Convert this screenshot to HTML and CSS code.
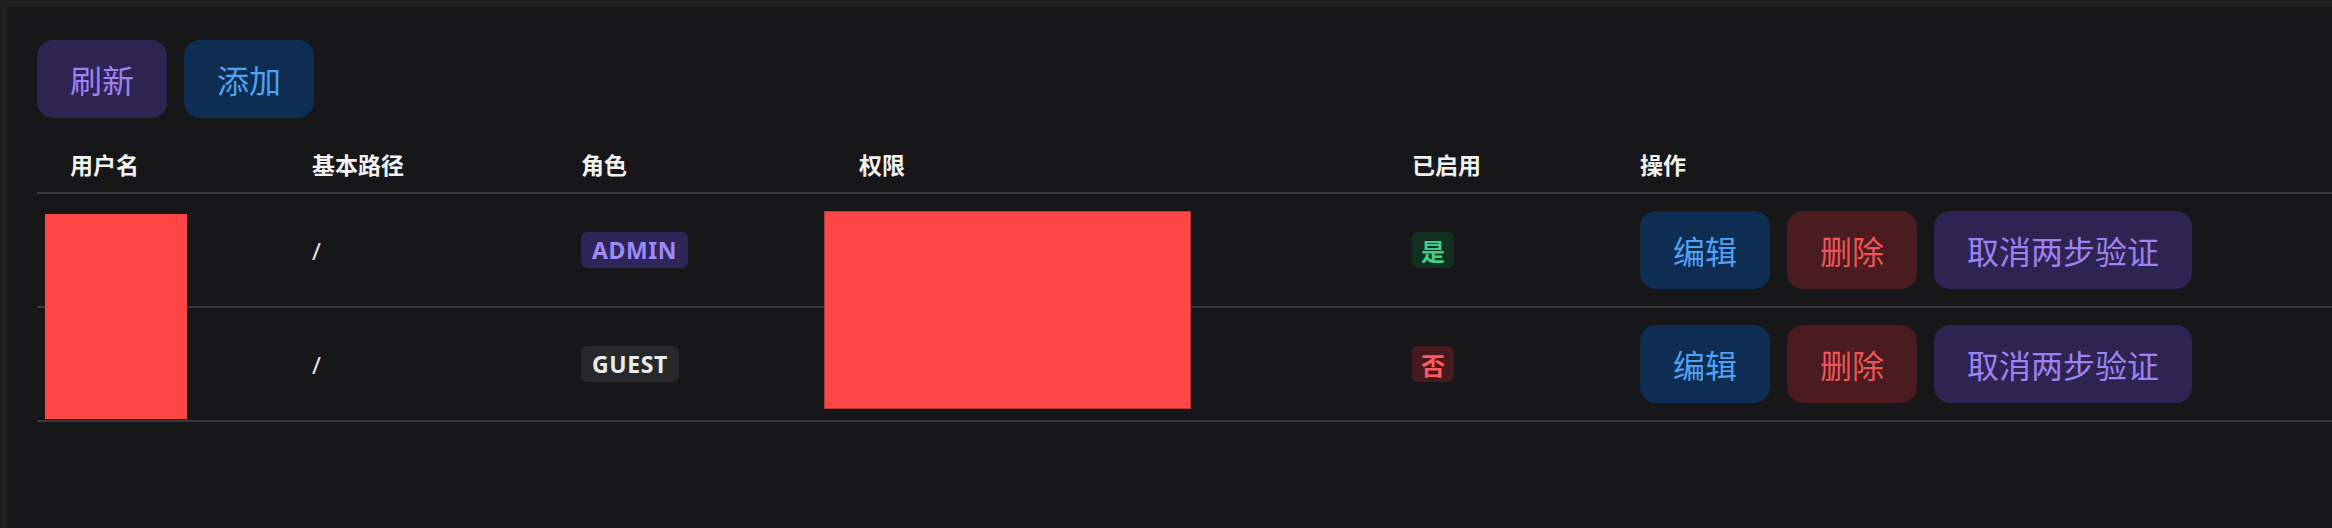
FILE: index.html
```html
<!DOCTYPE html>
<html lang="zh-CN">
<head>
<meta charset="utf-8">
<title>用户管理</title>
<link rel="stylesheet" href="styles.css">
</head>
<body>
<div class="panel">
  <div class="toolbar">
    <button class="btn btn-purple">刷新</button>
    <button class="btn btn-blue">添加</button>
  </div>
  <div class="table-wrap">
    <table class="users">
      <colgroup>
        <col class="c-name"><col class="c-path"><col class="c-role"><col class="c-perm"><col class="c-en"><col class="c-act">
      </colgroup>
      <thead>
        <tr><th>用户名</th><th>基本路径</th><th>角色</th><th>权限</th><th>已启用</th><th>操作</th></tr>
      </thead>
      <tbody>
        <tr>
          <td></td>
          <td class="path">/</td>
          <td><span class="tag tag-admin">ADMIN</span></td>
          <td></td>
          <td><span class="tag tag-yes">是</span></td>
          <td><div class="actions"><button class="btn btn-blue">编辑</button><button class="btn btn-red">删除</button><button class="btn btn-purple">取消两步验证</button></div></td>
        </tr>
        <tr>
          <td></td>
          <td class="path">/</td>
          <td><span class="tag tag-guest">GUEST</span></td>
          <td></td>
          <td><span class="tag tag-no">否</span></td>
          <td><div class="actions"><button class="btn btn-blue">编辑</button><button class="btn btn-red">删除</button><button class="btn btn-purple">取消两步验证</button></div></td>
        </tr>
      </tbody>
    </table>
    <div class="redact redact-name"></div>
    <div class="redact redact-perm"></div>
  </div>
</div>
</body>
</html>
```
FILE: styles.css
```css
html, body {
  margin: 0;
  padding: 0;
}
body {
  background: #1f1f20;
  width: 2332px;
  height: 528px;
  overflow: hidden;
  font-family: "Noto Sans", "Noto Sans CJK SC", sans-serif;
  color: #ececec;
}
.panel {
  margin: 7px 0 0 7px;
  height: 521px;
  background: #17171a;
  padding: 33px 0 0 30px;
  box-sizing: border-box;
  overflow: hidden;
}
.toolbar {
  display: flex;
  gap: 17px;
}
.btn {
  height: 78px;
  padding: 0 33px;
  border: none;
  border-radius: 16px;
  font-family: "Noto Sans CJK SC", sans-serif;
  font-size: 32px;
  font-weight: 400;
  cursor: pointer;
  white-space: nowrap;
}
.btn-purple { background: #2d2452; color: #9c82f2; }
.btn-blue { background: #0f2d52; color: #4ea2f2; }
.btn-red { background: #4a1b1f; color: #f0545a; }

.table-wrap {
  position: relative;
  margin-top: 14px;
}
.users {
  width: 2295px;
  table-layout: fixed;
  border-collapse: collapse;
}
.c-name { width: 242px; }
.c-path { width: 269px; }
.c-role { width: 278px; }
.c-perm { width: 553px; }
.c-en { width: 228px; }
.c-act { width: auto; }
.users th {
  text-align: left;
  font-family: "Noto Sans CJK SC", sans-serif;
  font-weight: 700;
  font-size: 23px;
  color: #f2f2f2;
  height: 61px;
  padding: 4px 0 0 33px;
  box-sizing: border-box;
  border-bottom: 2px solid #38383c;
  line-height: 1;
}
.users td {
  height: 112px;
  padding: 0 0 0 33px;
  vertical-align: middle;
  border-bottom: 2px solid #38383c;
}
.path {
  font-size: 24px;
  color: #e8e8e8;
}
.tag {
  display: inline-flex;
  align-items: center;
  justify-content: center;
  height: 36px;
  padding: 0 11px;
  border-radius: 6px;
  font-family: "Noto Sans", "Noto Sans CJK SC", sans-serif;
  font-weight: 700;
  font-size: 23px;
  letter-spacing: 0.6px;
  vertical-align: middle;
}
.tag-admin { background: #2e2558; color: #9d89f7; }
.tag-guest { background: #26282b; color: #ececec; }
.tag-yes { background: #12301f; color: #3fcf8b; padding: 0 9px; font-size: 24px; letter-spacing: 0; font-family: "Noto Sans CJK SC", sans-serif; }
.tag-no { background: #46191d; color: #ff5a60; padding: 0 9px; font-size: 24px; letter-spacing: 0; font-family: "Noto Sans CJK SC", sans-serif; }
.actions {
  display: flex;
  gap: 17px;
}
.redact {
  position: absolute;
  background: #ff4647;
  box-sizing: border-box;
}
.redact-name {
  left: 8px;
  top: 82px;
  width: 142px;
  height: 205px;
}
.redact-perm {
  left: 787px;
  top: 79px;
  width: 367px;
  height: 198px;
  border: 1px solid #b53a3c;
}
```
